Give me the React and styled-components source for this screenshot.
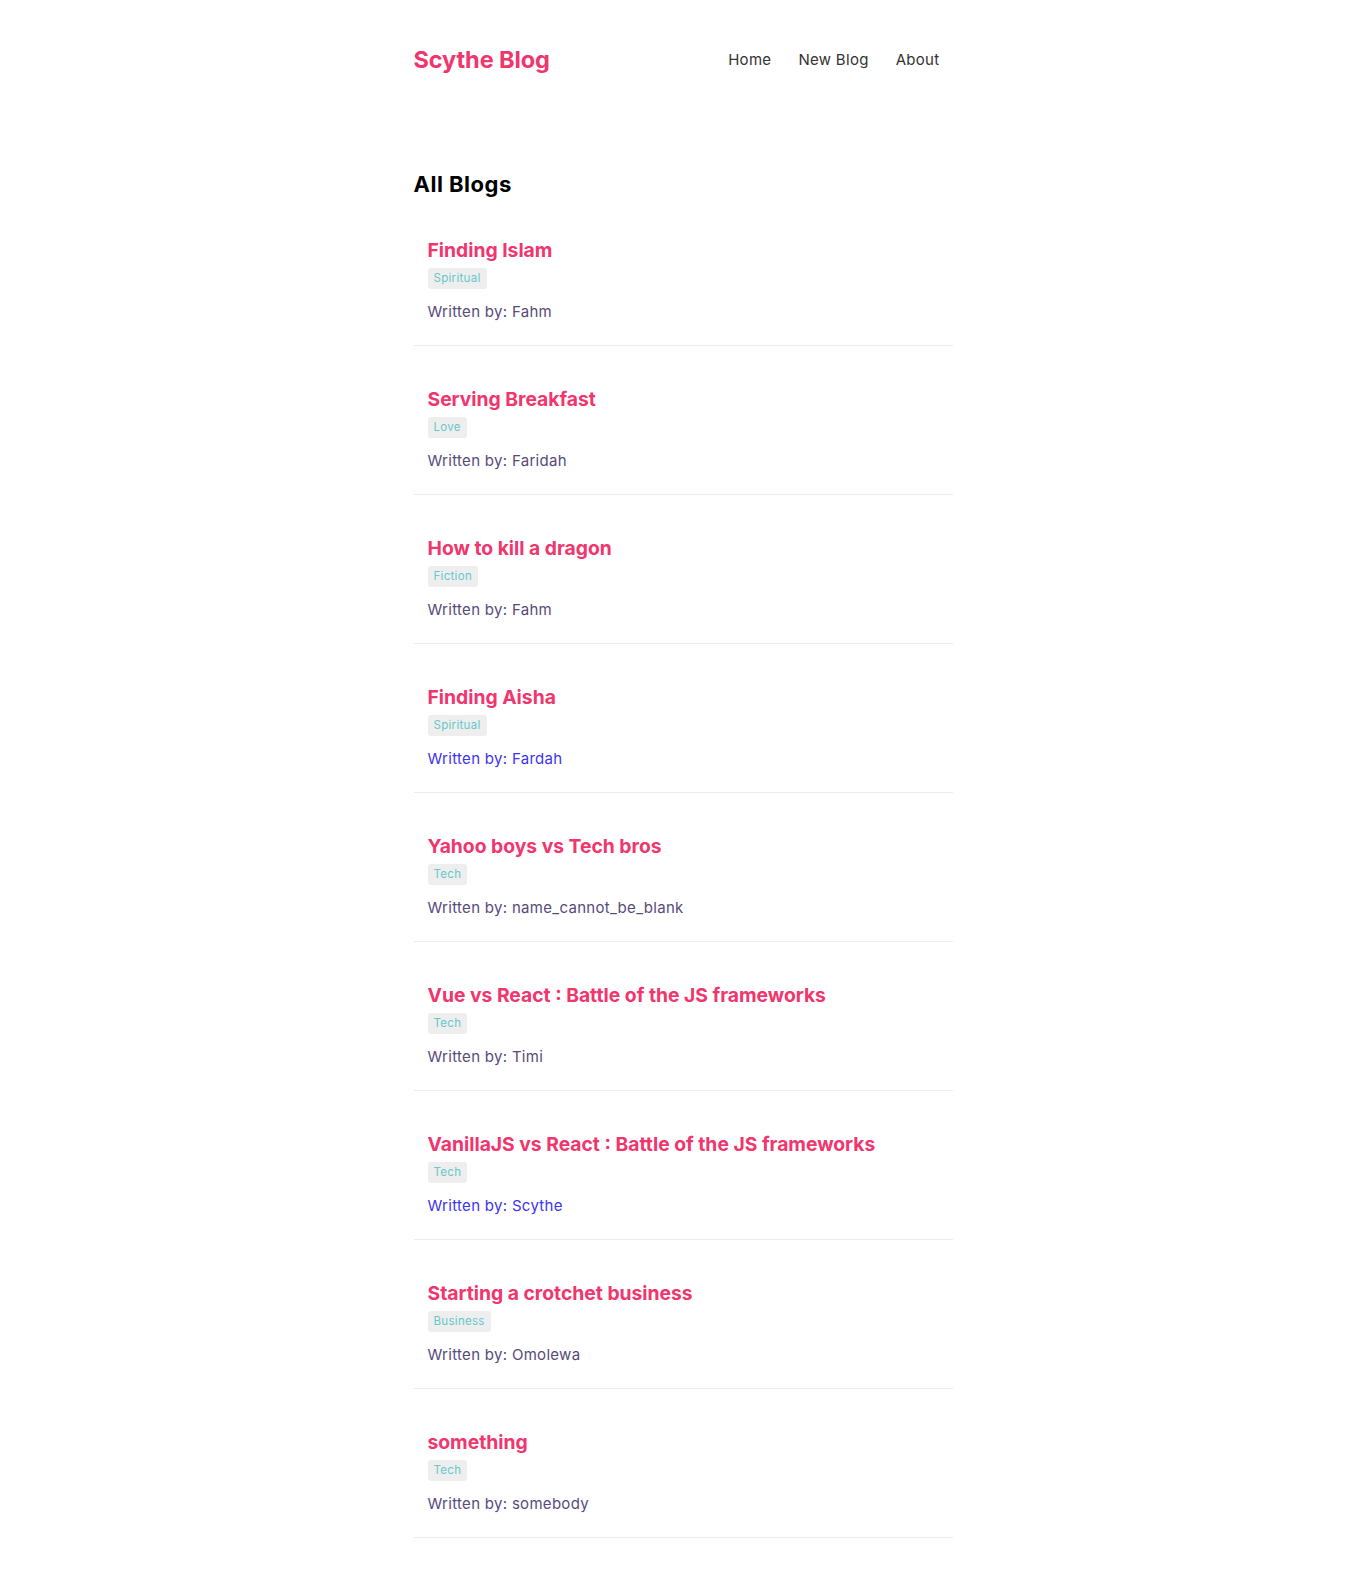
import React from "react";
import styled, { createGlobalStyle } from "styled-components";

const blogs = [
  { id: 1, title: "Finding Islam", tag: "Spiritual", author: "Fahm" },
  { id: 2, title: "Serving Breakfast", tag: "Love", author: "Faridah" },
  { id: 3, title: "How to kill a dragon", tag: "Fiction", author: "Fahm" },
  { id: 4, title: "Finding Aisha", tag: "Spiritual", author: "Fardah", fresh: true },
  { id: 5, title: "Yahoo boys vs Tech bros", tag: "Tech", author: "name_cannot_be_blank" },
  { id: 6, title: "Vue vs React : Battle of the JS frameworks", tag: "Tech", author: "Timi" },
  { id: 7, title: "VanillaJS vs React : Battle of the JS frameworks", tag: "Tech", author: "Scythe", fresh: true },
  { id: 8, title: "Starting a crotchet business", tag: "Business", author: "Omolewa" },
  { id: 9, title: "something", tag: "Tech", author: "somebody" },
];

const GlobalStyle = createGlobalStyle`
  * {
    box-sizing: border-box;
  }
  body {
    margin: 0;
    background: #fff;
    font-family: Inter, "Noto Sans", sans-serif;
    color: #333;
  }
`;

const App = () => {
  return (
    <Page>
      <GlobalStyle />
      <Navbar>
        <Logo>Scythe Blog</Logo>
        <Links>
          <NavLink href="#">Home</NavLink>
          <NavLink href="#">New Blog</NavLink>
          <NavLink href="#">About</NavLink>
        </Links>
      </Navbar>
      <Content>
        <Heading>All Blogs</Heading>
        {blogs.map((blog) => (
          <Preview key={blog.id} href="#">
            <Title>{blog.title}</Title>
            <TagRow>
              <Tag>{blog.tag}</Tag>
            </TagRow>
            <Author $fresh={blog.fresh}>Written by: {blog.author}</Author>
          </Preview>
        ))}
      </Content>
    </Page>
  );
};

const Page = styled.div`
  width: 539px;
  margin: 0 auto;
  padding: 44px 0 37px;
`;

const Navbar = styled.nav`
  display: flex;
  align-items: center;
  padding-right: 7px;
`;

const Logo = styled.h1`
  margin: 0;
  font-size: 23.5px;
  font-weight: 700;
  line-height: 30px;
  letter-spacing: -0.1px;
  color: #f1356d;
`;

const Links = styled.div`
  margin-left: auto;
  display: flex;
`;

const NavLink = styled.a`
  margin-left: 15px;
  padding: 6px;
  font-size: 15px;
  letter-spacing: 0.3px;
  color: #333;
  text-decoration: none;
`;

const Content = styled.main`
  margin-top: 96px;
`;

const Heading = styled.h2`
  margin: 0 0 20px;
  font-size: 22px;
  font-weight: 700;
  line-height: 26px;
  letter-spacing: 0.5px;
  color: #000;
`;

const Preview = styled.a`
  display: block;
  margin-top: 20px;
  padding: 10px 14px;
  border-bottom: 1px solid #ececec;
  text-decoration: none;

  &:first-of-type {
    margin-top: 0;
  }
`;

const Title = styled.h3`
  margin: 11px 0 6px;
  font-size: 19.3px;
  font-weight: 700;
  line-height: 24px;
  letter-spacing: 0;
  color: #f1356d;
`;

const TagRow = styled.div`
  display: flex;
  margin-bottom: 14px;
`;

const Tag = styled.span`
  padding: 4px 6px;
  border-radius: 3px;
  background: #eeeeee;
  font-size: 11.5px;
  line-height: 13px;
  letter-spacing: 0.3px;
  color: #66c7cc;
`;

const Author = styled.p`
  margin: 0 0 14px;
  font-size: 15px;
  line-height: 18px;
  letter-spacing: 0.3px;
  color: ${(p) => (p.$fresh ? "#3d33f2" : "#574a7a")};
`;

export default App;
